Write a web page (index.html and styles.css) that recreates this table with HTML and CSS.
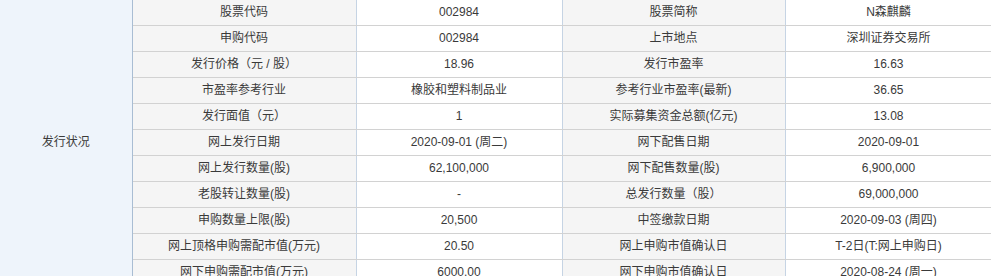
FILE: index.html
```html
<!DOCTYPE html>
<html lang="zh">
<head>
<meta charset="utf-8">
<title>发行状况</title>
<link rel="stylesheet" href="styles.css">
</head>
<body>
<div class="wrap">
<table class="info">
<colgroup>
<col class="c0"><col class="c1"><col class="c2"><col class="c3"><col class="c4">
</colgroup>
<tbody>
<tr><td class="group" rowspan="11">发行状况</td><td class="lbl">股票代码</td><td>002984</td><td class="lbl">股票简称</td><td>N森麒麟</td></tr>
<tr><td class="lbl">申购代码</td><td>002984</td><td class="lbl">上市地点</td><td>深圳证券交易所</td></tr>
<tr><td class="lbl">发行价格（元 / 股）</td><td>18.96</td><td class="lbl">发行市盈率</td><td>16.63</td></tr>
<tr><td class="lbl">市盈率参考行业</td><td>橡胶和塑料制品业</td><td class="lbl">参考行业市盈率(最新)</td><td>36.65</td></tr>
<tr><td class="lbl">发行面值（元）</td><td>1</td><td class="lbl">实际募集资金总额(亿元)</td><td>13.08</td></tr>
<tr><td class="lbl">网上发行日期</td><td>2020-09-01 (周二)</td><td class="lbl">网下配售日期</td><td>2020-09-01</td></tr>
<tr><td class="lbl">网上发行数量(股)</td><td>62,100,000</td><td class="lbl">网下配售数量(股)</td><td>6,900,000</td></tr>
<tr><td class="lbl">老股转让数量(股)</td><td>-</td><td class="lbl">总发行数量（股）</td><td>69,000,000</td></tr>
<tr><td class="lbl">申购数量上限(股)</td><td>20,500</td><td class="lbl">中签缴款日期</td><td>2020-09-03 (周四)</td></tr>
<tr><td class="lbl">网上顶格申购需配市值(万元)</td><td>20.50</td><td class="lbl">网上申购市值确认日</td><td>T-2日(T:网上申购日)</td></tr>
<tr><td class="lbl">网下申购需配市值(万元)</td><td>6000.00</td><td class="lbl">网下申购市值确认日</td><td>2020-08-24 (周一)</td></tr>
</tbody>
</table>
</div>
</body>
</html>
```
FILE: styles.css
```css
html, body {
  margin: 0;
  padding: 0;
  background: #fff;
}
.wrap {
  position: relative;
  width: 991px;
  margin-top: -1px;
  overflow: hidden;
}
.info {
  border-collapse: collapse;
  table-layout: fixed;
  width: 992px;
  font-family: "Liberation Sans", "Noto Sans CJK SC", sans-serif;
  font-size: 12px;
  color: #3a3a3a;
}
.c0 { width: 132px; }
.c1 { width: 224px; }
.c2 { width: 206px; }
.c3 { width: 223px; }
.c4 { width: 207px; }
.info td {
  height: 25px;
  padding: 0;
  text-align: center;
  vertical-align: middle;
  border-top: 1px solid #d2d2d2;
  border-bottom: 1px solid #d2d2d2;
  border-left: 1px solid #c6d4e4;
  border-right: 1px solid #c6d4e4;
  line-height: 25px;
  white-space: nowrap;
}
.info td.group {
  background: #eef4fb;
  border-left: none;
  border-right: 1px solid #a9bdd3;
}
.info td.lbl {
  background: #f5f5f5;
}
```
